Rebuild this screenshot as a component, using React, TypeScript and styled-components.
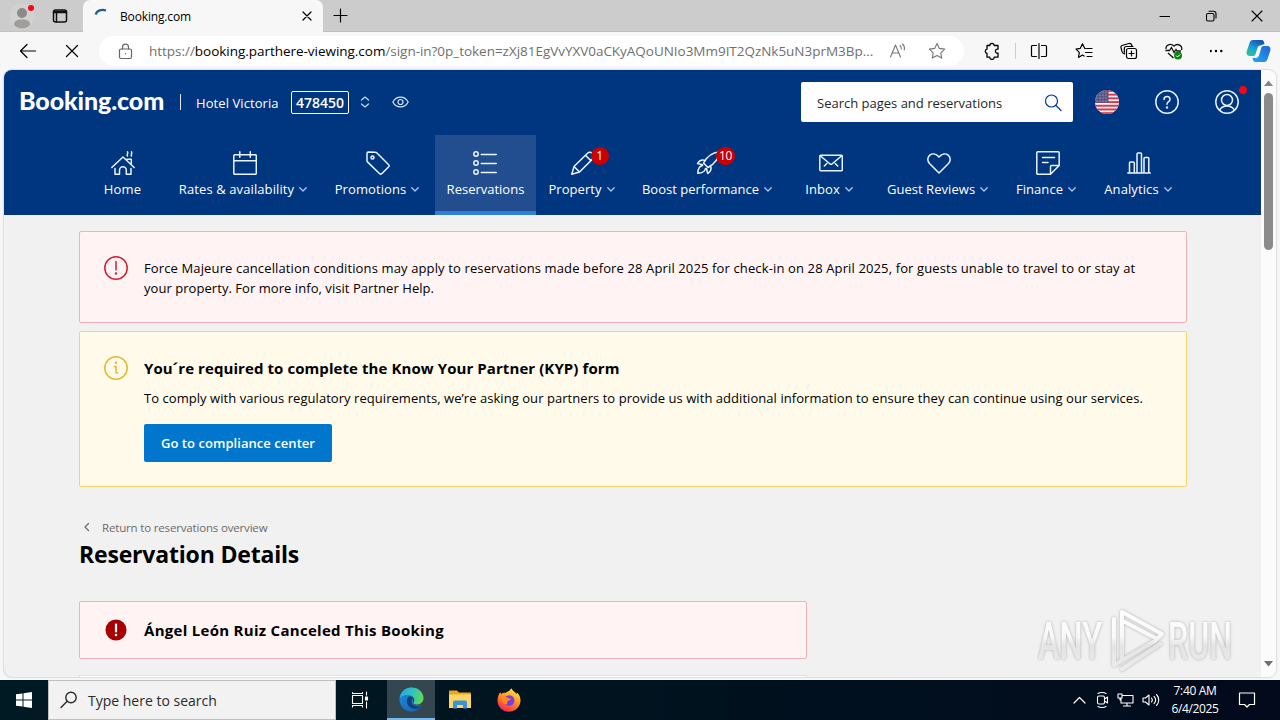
import React from 'react';
import styled, { createGlobalStyle } from 'styled-components';

const GlobalStyle = createGlobalStyle`
  * {
    box-sizing: border-box;
  }

  body {
    margin: 0;
    overflow: hidden;
    font-family: 'Open Sans', 'Noto Sans', sans-serif;
    color: #000;
  }

  svg {
    display: block;
    flex: none;
  }
`;

const Screen = styled.div`
  width: 1280px;
  height: 720px;
  display: flex;
  flex-direction: column;
  background: #f7f7f7;
  overflow: hidden;
`;

const Text = styled.span<{ $size?: number; $spacing?: number; $weight?: number; $color?: string }>`
  font-size: ${({ $size }) => $size ?? 13}px;
  letter-spacing: ${({ $spacing }) => $spacing ?? 0}px;
  font-weight: ${({ $weight }) => $weight ?? 400};
  color: ${({ $color }) => $color ?? 'inherit'};
  white-space: nowrap;
`;

/* ---------- browser chrome ---------- */

const TitleBar = styled.div`
  height: 32px;
  flex: none;
  display: flex;
  background: #ccc;
`;

const ProfileArea = styled.div`
  width: 83px;
  display: flex;
  align-items: center;
  gap: 16px;
  padding-left: 10px;
  border-bottom: 1px solid #c2c2c2;
`;

const Tab = styled.div`
  width: 240px;
  display: flex;
  align-items: center;
  padding: 0 9px 0 11px;
  background: #f7f7f7;
  border-radius: 7px 7px 0 0;
`;

const TabTitle = styled(Text)`
  flex: 1;
  margin-left: 10px;
`;

const TabStrip = styled.div`
  flex: 1;
  display: flex;
  align-items: center;
  padding-left: 10px;
  border-bottom: 1px solid #bdbdbd;
`;

const WindowButtons = styled.div`
  margin-left: auto;
  margin-right: 17px;
  display: flex;
  gap: 34px;
`;

const Toolbar = styled.div`
  height: 38px;
  flex: none;
  display: flex;
  align-items: center;
  padding-left: 19px;
`;

const StopButton = styled.div`
  margin: 0 20px 0 28px;
`;

const AddressBar = styled.div`
  width: 865px;
  height: 30px;
  flex: none;
  padding: 0 0 0 18px;
  display: flex;
  align-items: center;
  background: #fff;
  border-radius: 15px;
`;

const Url = styled(Text)`
  width: 740px;
  margin-left: 15px;

  b {
    font-weight: 400;
    color: #000;
  }
`;

const AddressIcons = styled.div`
  display: flex;
  gap: 21px;
`;

const ToolbarActions = styled.div`
  flex: 1;
  display: flex;
  align-items: center;
  justify-content: space-between;
  padding: 0 9px 0 19px;
`;

const ActionGroup = styled.div`
  display: flex;
  align-items: center;
  gap: 27px;
`;

const Separator = styled.div`
  width: 1px;
  height: 16px;
  margin: 0 -13px;
  background: #ccc;
`;

/* ---------- page ---------- */

const Viewport = styled.div`
  width: 1272px;
  height: 607px;
  margin: 0 4px;
  flex: none;
  display: flex;
  background: #f1f1f1;
  border-radius: 8px;
  overflow: hidden;
  box-shadow: 0 0 2px rgba(0, 0, 0, 0.35);
`;

const Page = styled.div`
  width: 1257px;
  height: 607px;
  overflow: hidden;
`;

const Scrollbar = styled.div`
  width: 15px;
  display: flex;
  flex-direction: column;
  align-items: center;
  background: #fbfbfb;
  padding: 10px 0 10px;
`;

const Thumb = styled.div`
  width: 9px;
  height: 157px;
  margin: 7px 0 auto;
  border-radius: 5px;
  background: #8b8b8b;
`;

const Header = styled.header`
  height: 145px;
  background: #003580;
  color: #fff;
`;

const TopRow = styled.div`
  height: 64px;
  margin-bottom: 1px;
  display: flex;
  align-items: center;
  padding: 0 22px 0 15px;
`;

const Logo = styled.div`
  width: 161px;
  font-family: Lato, 'Open Sans', sans-serif;
  font-size: 25px;
  line-height: 28px;
  font-weight: 900;
  letter-spacing: -0.1px;
  margin-top: -5px;
`;

const Divider = styled.div`
  width: 1px;
  height: 16px;
  background: #e3ebf5;
  margin-right: 15px;
`;

const PropertyName = styled(Text)`
  width: 83px;
  padding-top: 1px;
`;

const PropertyId = styled.div`
  width: 58px;
  height: 23px;
  margin: 1px 11px 0 12px;
  display: flex;
  align-items: center;
  justify-content: center;
  border: 1px solid #fff;
  border-radius: 2px;
`;

const Watching = styled.div`
  margin-left: 22px;
`;

const Search = styled.div`
  width: 272px;
  height: 40px;
  margin-left: auto;
  padding: 1px 11px 0 16px;
  display: flex;
  align-items: center;
  justify-content: space-between;
  background: #fff;
  color: #262626;
  border-radius: 2px;
`;

const HeaderIcons = styled.div`
  width: 144px;
  margin-left: 22px;
  display: flex;
  justify-content: space-between;
`;

const WithDot = styled.div`
  position: relative;
`;

const Dot = styled.i<{ $x: number; $y: number; $size: number }>`
  position: absolute;
  left: ${({ $x }) => $x}px;
  top: ${({ $y }) => $y}px;
  width: ${({ $size }) => $size}px;
  height: ${({ $size }) => $size}px;
  border-radius: 50%;
  background: #f00a14;
`;

const Nav = styled.nav`
  height: 80px;
  padding-left: 76px;
  display: flex;
`;

const NavItem = styled.div<{ $width: number; $active?: boolean }>`
  width: ${({ $width }) => $width}px;
  height: 80px;
  padding-top: 16px;
  display: flex;
  flex-direction: column;
  align-items: center;
  background: ${({ $active }) => ($active ? '#224e90' : 'transparent')};
  border-bottom: ${({ $active }) => ($active ? '4px solid #2f80d8' : '0')};
`;

const NavIcon = styled.div<{ $shift: number }>`
  position: relative;
  height: 25px;
  margin-left: ${({ $shift }) => $shift}px;
`;

const NavLabel = styled.div`
  height: 26px;
  display: flex;
  align-items: center;
  gap: 5px;
`;

const Badge = styled.span`
  position: absolute;
  left: 20px;
  top: -4px;
  min-width: 18px;
  height: 18px;
  padding: 0 3px;
  border-radius: 9px;
  background: #c00;
  font-size: 12px;
  letter-spacing: -0.3px;
  line-height: 18px;
  text-align: center;
`;

const Content = styled.main`
  padding: 16px 74px 0 75px;
`;

const Alert = styled.section<{ $tone: 'red' | 'yellow'; $height: number; $width?: number }>`
  width: ${({ $width }) => $width ?? 1108}px;
  height: ${({ $height }) => $height}px;
  margin-bottom: 8px;
  padding: 0 24px;
  display: flex;
  gap: 16px;
  border: 1px solid ${({ $tone }) => ($tone === 'red' ? '#f5afb9' : '#f5d568')};
  border-radius: 2px;
  background: ${({ $tone }) => ($tone === 'red' ? '#fff3f3' : '#fffaea')};
`;

const AlertIcon = styled.div<{ $top: number }>`
  padding-top: ${({ $top }) => $top}px;
`;

const AlertBody = styled.div<{ $top: number }>`
  padding-top: ${({ $top }) => $top}px;
  display: flex;
  flex-direction: column;
  align-items: flex-start;
  line-height: 20px;
`;

const ComplianceButton = styled.button`
  width: 188px;
  height: 38px;
  margin-top: 16px;
  padding: 0;
  border: 0;
  border-radius: 2px;
  background: #0077cc;
  color: #fff;
  font-family: inherit;
`;

const AlertTitle = styled(Text)`
  margin-bottom: 10px;
`;

const BackLink = styled.div`
  height: 20px;
  margin-top: 30px;
  padding-left: 4px;
  display: flex;
  align-items: center;
  gap: 12px;
  color: #6b6b6b;
`;

const Heading = styled.h1`
  height: 34px;
  margin: 0 0 30px;
  font-size: 23px;
  line-height: 34px;
  font-weight: 700;
  letter-spacing: -0.18px;
`;

const NextCard = styled.div`
  width: 728px;
  height: 20px;
  margin-top: 16px;
  border: 1px solid #e2e2e2;
  background: #fff;
`;

/* ---------- taskbar ---------- */

const Taskbar = styled.div`
  height: 40px;
  margin-top: 3px;
  flex: none;
  display: flex;
  align-items: center;
  background: linear-gradient(90deg, #001a24 0%, #00131f 50%, #020a1c 100%);
  color: #fff;
`;

const TaskCell = styled.div<{ $width: number; $active?: boolean }>`
  width: ${({ $width }) => $width}px;
  height: 40px;
  display: flex;
  align-items: center;
  justify-content: center;
  background: ${({ $active }) => ($active ? '#34474f' : 'transparent')};
  border-bottom: ${({ $active }) => ($active ? '2px solid #76b9ed' : '0')};
`;

const TaskView = styled.div`
  width: 51px;
  padding-left: 15px;
`;

const TaskSearch = styled.div`
  width: 288px;
  height: 40px;
  padding-left: 11px;
  display: flex;
  align-items: center;
  gap: 10px;
  background: #f2f2f2;
  border: 1px solid #bfbfbf;
  color: #2b2b2b;
`;

const Tray = styled.div`
  margin-left: auto;
  margin-right: 16px;
  display: flex;
  align-items: center;
`;

const TrayIcons = styled.div`
  display: flex;
  align-items: center;
  gap: 8px;
`;

const Clock = styled.div`
  width: 70px;
  display: flex;
  flex-direction: column;
  align-items: center;
  line-height: 18px;
`;

const Watermark = styled.svg`
  position: absolute;
  left: 1030px;
  top: 600px;
  filter: drop-shadow(0 0 1.5px rgba(0, 0, 0, 0.28));
`;

/* ---------- icons ---------- */

type IconProps = {
  w?: number;
  h?: number;
  color?: string;
  stroke?: number;
  children: React.ReactNode;
};

const Icon = ({ w = 24, h = w, color = 'currentColor', stroke = 1.5, children }: IconProps) => (
  <svg
    width={w}
    height={h}
    viewBox={`0 0 ${w} ${h}`}
    fill="none"
    stroke={color}
    strokeWidth={stroke}
    strokeLinecap="round"
    strokeLinejoin="round"
  >
    {children}
  </svg>
);

const Chevron = () => (
  <Icon w={8} h={5} stroke={1.3} color="#a9c8f5">
    <path d="M.8.8 4 4 7.2.8" />
  </Icon>
);

const navIcons: Record<string, React.ReactNode> = {
  home: (
    <>
      <path d="M.8 16.500 12 6 23.200 16.500M4 17.500v5.700h4.500v-4a3.300 3.300 0 0 1 6.800 0v4H20v-5.700M16 8.200h4.300v5.200" />
      <path d="M16.500 5c-1-1.500 1-2.300 0-4.200M20.500 5c-1-1.500 1-2.300 0-4.200" />
    </>
  ),
  calendar: (
    <>
      <rect x=".8" y="3.8" width="22.500" height="19.500" rx="1" />
      <path d="M.8 9.800h22.500M6.800.8v5.500M17.300.8v5.500" />
    </>
  ),
  tag: (
    <>
      <path d="M1 2.500v7.200c0 .6.3 1 .7 1.400l12 11.600c.6.5 1.400.5 2 0l7-7c.6-.6.6-1.400 0-2L11 2c-.4-.5-.9-.7-1.500-.7L2.200 1C1.500 1 1 1.700 1 2.500z" />
      <circle cx="6.500" cy="6.500" r="1.500" />
    </>
  ),
  list: (
    <>
      <circle cx="3" cy="3" r="2.200" />
      <circle cx="3" cy="12" r="2.200" />
      <circle cx="3" cy="21" r="2.200" />
      <path d="M8.300 3.500h15M8.300 12.500h15M8.300 21.500h15" />
    </>
  ),
  pencil: (
    <path d="M.8 23.200 3 15.500 16.500 2.200a3 3 0 0 1 4.500 0l.9.900a3 3 0 0 1 0 4.500L8.500 21zM3 15.500 8.500 21M14.500 4.300l5.300 5.300" />
  ),
  rocket: (
    <path d="M7.500 12C11 5.500 15.500 1.500 23 1c-.4 7.500-4.500 12-11 15.500zM9.500 9.500C6 8.200 3.200 9.500 1.500 12.500l5 1.200M14.500 14.500c1.300 3.500.2 6.300-2.800 8l-1.200-5M6.500 14.500c-3 .5-4.500 3.500-4.800 7.800 4.300-.3 7.300-1.800 7.800-4.800" />
  ),
  mail: (
    <>
      <rect x=".8" y="4.300" width="22.500" height="15.500" rx="1" />
      <path d="m1.500 5 9.300 7.800c.8.600 1.600.6 2.400 0L22.500 5M5.300 15l2.500-2.500M18.700 15l-2.500-2.500" />
    </>
  ),
  heart: <path d="M12 22 2.500 12.500c-5.300-6 3-14 9.500-6.500 6.500-7.500 14.800.5 9.500 6.500z" />,
  note: (
    <path d="M14.500 23.300H1.800a1 1 0 0 1-1-1V1.800a1 1 0 0 1 1-1h20.400a1 1 0 0 1 1 1v12.700zM14.500 23.300v-7.800a1 1 0 0 1 1-1h7.700M6.500 6.500h12M6.500 11.500h5.500" />
  ),
  chart: (
    <path d="M.8 22h22.500M2.500 22V12a1 1 0 0 1 1-1h2.800a1 1 0 0 1 1 1v10M10 22V3a1 1 0 0 1 1-1h2.500a1 1 0 0 1 1 1v19M17 22V7.500a1 1 0 0 1 1-1h2.800a1 1 0 0 1 1 1V22" />
  ),
};

const navItems = [
  { label: 'Home', icon: 'home', width: 85, spacing: 0.25, shift: 1 },
  { label: 'Rates & availability', icon: 'calendar', width: 156, spacing: 0.1, shift: 3, menu: true },
  { label: 'Promotions', icon: 'tag', width: 112, spacing: 0.1, shift: 2, menu: true },
  { label: 'Reservations', icon: 'list', width: 101, spacing: 0, shift: -1, active: true },
  { label: 'Property', icon: 'pencil', width: 91, spacing: 0.05, shift: 2, menu: true, badge: 1 },
  { label: 'Boost performance', icon: 'rocket', width: 160, spacing: 0, shift: 2, menu: true, badge: 10 },
  { label: 'Inbox', icon: 'mail', width: 84, spacing: 0.1, shift: 4, menu: true },
  { label: 'Guest Reviews', icon: 'heart', width: 133, spacing: 0.05, shift: 2, menu: true },
  { label: 'Finance', icon: 'note', width: 84, spacing: 0.05, shift: 4, menu: true },
  { label: 'Analytics', icon: 'chart', width: 100, spacing: 0.1, shift: 2, menu: true },
];

const NavSpacer = styled.div`
  width: 2px;
`;

const FlagUS = () => (
  <svg width="24" height="24" viewBox="0 0 24 24">
    <clipPath id="flag">
      <circle cx="12" cy="12" r="12" />
    </clipPath>
    <g clipPath="url(#flag)">
      <rect width="24" height="24" fill="#f3eef2" />
      {[0, 3.7, 7.4, 11.1, 14.8, 18.5, 22.2].map((y) => (
        <rect key={y} y={y} width="24" height="1.900" fill="#d8384a" />
      ))}
      <rect width="13.500" height="12.900" fill="#5a5582" />
      {[2, 5, 8, 11].map((y) =>
        [2, 5, 8, 11].map((x) => <circle key={`${x}-${y}`} cx={x} cy={y} r=".6" fill="#c9cbe0" />),
      )}
    </g>
  </svg>
);

const Copilot = () => (
  <svg width="25" height="24" viewBox="0 0 25 24">
    <defs>
      <linearGradient id="cpA" x1="0" y1="1" x2=".6" y2="0">
        <stop offset="0" stopColor="#36c98a" />
        <stop offset=".5" stopColor="#1ba4d5" />
        <stop offset="1" stopColor="#1456b8" />
      </linearGradient>
      <linearGradient id="cpB" x1="0" y1="1" x2="1" y2="0">
        <stop offset="0" stopColor="#1fa8ee" />
        <stop offset="1" stopColor="#2165d9" />
      </linearGradient>
    </defs>
    <path d="M7 1h8.500c2 0 2.500 1.500 3 4l-4 1.500c-2 0-2.700 1.200-3.200 3L9.500 15c-.5 1.500-1.300 2-3 2H4c-3 0-4-2.300-3.200-5L3.500 4C4.200 2 5 1 7 1z" fill="url(#cpA)" />
    <path d="M18 23H9.500c-2 0-2.500-1.500-3-4 0 0 3.800.3 5-.5 1.300-.8 1.500-2 2-3.500L15.200 9c.5-1.500 1.300-2 3-2H21c3 0 4 2.300 3.200 5l-2.700 8c-.7 2-1.500 3-3.500 3z" fill="url(#cpB)" />
  </svg>
);

const Edge = () => (
  <svg width="25" height="25" viewBox="0 0 25 25">
    <defs>
      <linearGradient id="edgeTop" x1="0" y1=".3" x2="1" y2=".5">
        <stop offset="0" stopColor="#2aa8e0" />
        <stop offset=".5" stopColor="#2cc3c0" />
        <stop offset="1" stopColor="#63d957" />
      </linearGradient>
      <linearGradient id="edgeLow" x1="0" y1="0" x2="1" y2="1">
        <stop offset="0" stopColor="#1b8edb" />
        <stop offset="1" stopColor="#1a5fb0" />
      </linearGradient>
    </defs>
    <path d="M.5 12.500C.5 5.500 6 .5 12.500.5L14 16c1.500 2.500 5.500 3 9 1.500-2 4.500-6 7-10.500 7-6.500 0-12-5.500-12-12z" fill="url(#edgeLow)" />
    <path d="M10 9.500c-3 2-3 8 1.500 11 3.500 2.300 8 1.500 11-1.500-4 1.500-9 0-10-3.500-.5-2 .5-3 1-4.500-.5-1-2-2-3.500-1.500z" fill="#103f7c" />
    <path d="M.6 11.500C1.500 5 6.500.5 12.500.5c7 0 12 5 12 10.500 0 4-3 6.500-6.500 6.500-2.500 0-4-1-3.500-2 2.500-3-.5-7.500-5.500-7.500-4 0-7 1.500-8.400 3.500z" fill="url(#edgeTop)" />
  </svg>
);

const Folder = () => (
  <svg width="22" height="20" viewBox="0 0 22 20">
    <path d="M0 1.500C0 .7.500.5 1 .5h7l2 2h11c.6 0 1 .4 1 1V18H0z" fill="#e9a823" />
    <path d="M0 4.500h22V18H0z" fill="#fcd562" />
    <path d="M4 18.500v-6a2 2 0 0 1 2-2h10a2 2 0 0 1 2 2v6h-4v-3.500H8v3.500z" fill="#3b93d6" />
  </svg>
);

const Firefox = () => (
  <svg width="24" height="24" viewBox="0 0 24 24">
    <defs>
      <linearGradient id="fox" x1=".8" y1="0" x2=".3" y2="1">
        <stop offset="0" stopColor="#fff14a" />
        <stop offset=".45" stopColor="#ff9a1f" />
        <stop offset="1" stopColor="#f5224f" />
      </linearGradient>
    </defs>
    <path d="M3.500 4c0 1 .3 1.500.8 2C5.500 5 7 4.500 8.500 5c.7-.8 1.500-1.300 2.500-1.500C12.500 3 13 1.500 14.500.2c.3 2.300 3.500 3 5 6 .3-.5.3-1.200.2-2C23 7 24 11 23.300 14.500 22.200 20 17.500 23.800 12 23.800 5.500 23.800.5 18.700.5 12.500c0-3 1-6.500 3-8.500z" fill="url(#fox)" />
    <circle cx="12.300" cy="12.500" r="5.200" fill="#7a3ee0" />
    <path d="M4.500 8.500c3 0 4.500.5 6.500 1.500 1.500.8 2.300.5 3 .5-.5 1.500-2 1.500-3 2.500-1 .8-1.500 2-.5 3-3.500 1-6.500-3-6-7.500z" fill="#ff8a1c" />
  </svg>
);

function App() {
  return (
    <>
      <GlobalStyle />
      <Screen>
        <TitleBar>
          <ProfileArea>
            <WithDot>
              <svg width="26" height="26" viewBox="0 0 26 26">
                <circle cx="12" cy="13" r="12.500" fill="#d3d1d0" />
                <circle cx="12" cy="10" r="5" fill="#8d8b8a" />
                <path d="M4 22c0-4 2.500-5.500 8-5.500s8 1.500 8 5.500c-2 2.500-5 3.300-8 3.300S6 24.500 4 22z" fill="#a09d9b" />
              </svg>
              <Dot $x={18} $y={2} $size={6} />
            </WithDot>
            <Icon w={16} color="#111">
              <rect x="1.500" y="2" width="13" height="12" rx="2" />
              <path d="M1.500 4.500h13M4.500 4.500V14M2 3.500h12" />
            </Icon>
          </ProfileArea>
          <Tab>
            <Icon w={16} stroke={2.2} color="#1c5f96">
              <path d="M1.500 6.500C3 2.500 7.500.8 12 2.500" strokeLinecap="butt" />
            </Icon>
            <TabTitle $size={12} $spacing={-0.15}>Booking.com</TabTitle>
            <Icon w={14} stroke={1.2}>
              <path d="m3 3 8 8M11 3l-8 8" />
            </Icon>
          </Tab>
          <TabStrip>
            <Icon w={15} stroke={1.2}>
              <path d="M7.500 1v13M1 7.500h13" />
            </Icon>
            <WindowButtons>
              <Icon w={12} stroke={1.1}>
                <path d="M1 6.500h9.500" />
              </Icon>
              <Icon w={12} stroke={1.1}>
                <rect x="1.500" y="3.500" width="7.500" height="7.500" rx="1.500" />
                <path d="M4 1.300h4.500a2.500 2.500 0 0 1 2.500 2.500V8" />
              </Icon>
              <Icon w={12} stroke={1.1}>
                <path d="m1 1 10 10M11 1 1 11" />
              </Icon>
            </WindowButtons>
          </TabStrip>
        </TitleBar>

        <Toolbar>
          <Icon w={18} stroke={1.2}>
            <path d="M16.500 9H1.500M8 2.500 1.500 9 8 15.500" />
          </Icon>
          <StopButton>
            <Icon w={14} stroke={1.2}>
              <path d="m1.500 1.500 11 11M12.500 1.500l-11 11" />
            </Icon>
          </StopButton>
          <AddressBar>
            <Icon w={17} color="#666" stroke={1.2}>
              <rect x="2.500" y="6" width="12" height="9.500" rx="1.500" />
              <path d="M5.500 6V4.200a3 3 0 0 1 6 0V6" />
              <circle cx="8.500" cy="10.700" r=".7" fill="#666" stroke="none" />
            </Icon>
            <Url $size={13.5} $spacing={-0.03} $color="#707070">
              https://<b>booking.parthere-viewing.com</b>/sign-in?0p_token=zXj81EgVvYXV0aCKyAQoUNIo3Mm9IT2QzNk5uN3prM3Bp...
            </Url>
            <AddressIcons>
              <Icon w={18} color="#777" stroke={1.1}>
                <path d="M1.500 15 6.500 3l5 12M3.200 11h6.600M11 3.500c1 .8 1.500 2 1.300 3.500M13.500 2c1.700 1.500 2.300 3.500 1.800 6" />
              </Icon>
              <Icon w={18} color="#777" stroke={1.1}>
                <path d="m9 1.500 2.300 4.900 5.400.7-3.900 3.700.9 5.300L9 13.500l-4.700 2.600.9-5.300L1.300 7.100l5.400-.7z" />
              </Icon>
            </AddressIcons>
          </AddressBar>
          <ToolbarActions>
            <ActionGroup>
              <Icon w={18} stroke={1.3}>
                <path d="M4 3.500h2.800a2.200 2.200 0 0 1 4.400 0H15v3.700a2 2 0 1 0 0 3.800v4.200h-3.800a2.200 2.200 0 0 1-4.400 0H4V11.500a2.200 2.200 0 0 1 0-4.300z" />
              </Icon>
              <Separator />
              <Icon w={18} stroke={1.2}>
                <path d="M6.500 3.500h-4a1 1 0 0 0-1 1v9a1 1 0 0 0 1 1h4M11.500 3.500h4a1 1 0 0 1 1 1v9a1 1 0 0 1-1 1h-4M9 1.500v15" />
              </Icon>
              <Icon w={18} stroke={1.2}>
                <path d="M11 6.500H9.800L7.500 1.800 5.200 6.400l-4.200.7 3.300 3.300-.8 5 4-2.300 1.500 1M12 6.500h5M10.500 10.500H17M12 14.500h5" />
              </Icon>
              <Icon w={18} stroke={1.2}>
                <path d="M4.300 12C2.500 11.500 2 10.500 1.800 9L1 5.500c-.3-1 .2-1.800 1-2L9 1.500c1.500-.3 2.500.5 3 2.500" />
                <rect x="6.500" y="6.500" width="10" height="10" rx="2" />
                <path d="M4.300 11.500V6.500a2 2 0 0 1 2-2H13M11.500 9v5M9 11.500h5" />
              </Icon>
              <svg width="18" height="18" viewBox="0 0 18 18" fill="none" stroke="#111" strokeWidth="1.300">
                <path d="M1.200 7C0 3 5.500.8 9 4c3.500-3.200 9-.5 7.500 4M.5 8.500h4l2-3 2.500 5 2-3 1 1.500h4M3 11l5.500 5" />
                <circle cx="13" cy="13.500" r="4" fill="#128012" stroke="none" />
                <path d="m11 13.500 1.500 1.500 2.700-2.700" stroke="#fff" strokeWidth="1" />
              </svg>
              <svg width="14" height="4" viewBox="2 0 14 4">
                <circle cx="2.700" cy="2" r="1.200" />
                <circle cx="8" cy="2" r="1.200" />
                <circle cx="13.300" cy="2" r="1.200" />
              </svg>
            </ActionGroup>
            <Copilot />
          </ToolbarActions>
        </Toolbar>

        <Viewport>
          <Page>
            <Header>
              <TopRow>
                <Logo>Booking.com</Logo>
                <Divider />
                <PropertyName $spacing={0.08}>Hotel Victoria</PropertyName>
                <PropertyId>
                  <Text $size={14} $weight={600}>478450</Text>
                </PropertyId>
                <Icon w={10} h={12} stroke={1.2} color="#c5dcfa">
                  <path d="m1.500 4 3.500-3 3.500 3M1.500 8l3.500 3 3.500-3" />
                </Icon>
                <Watching>
                  <Icon w={17} h={12} stroke={1.2} color="#d5e6fb">
                    <path d="M.8 6C4.500-.6 12.500-.6 16.200 6 12.500 12.600 4.500 12.600.8 6z" />
                    <circle cx="8.500" cy="6" r="2.500" />
                  </Icon>
                </Watching>
                <Search>
                  <Text>Search pages and reservations</Text>
                  <Icon w={18} stroke={1.2} color="#003f94">
                    <circle cx="7.500" cy="7" r="6" />
                    <path d="m12 11.500 5 5" />
                  </Icon>
                </Search>
                <HeaderIcons>
                  <FlagUS />
                  <Icon w={24} color="#e6f1ff">
                    <circle cx="12" cy="12" r="11.200" />
                    <path d="M9 9.500c0-4 6-4 6 0 0 2.200-3 2.200-3 4.800" />
                    <circle cx="12" cy="17.500" r=".5" />
                  </Icon>
                  <WithDot>
                    <Icon w={24} color="#e6f1ff">
                      <circle cx="12" cy="12" r="11.200" />
                      <circle cx="12" cy="10" r="5.500" />
                      <path d="M4.500 20c3.500-5.500 11.500-5.500 15 0" />
                    </Icon>
                    <Dot $x={24} $y={-4} $size={8} />
                  </WithDot>
                </HeaderIcons>
              </TopRow>
              <Nav>
                {navItems.map((item) => (
                  <React.Fragment key={item.label}>
                    {item.active && <NavSpacer />}
                    <NavItem $width={item.width} $active={item.active}>
                      <NavIcon $shift={item.shift}>
                        <Icon w={24} color="#eaf4ff">
                          {navIcons[item.icon]}
                        </Icon>
                        {item.badge && <Badge>{item.badge}</Badge>}
                      </NavIcon>
                      <NavLabel>
                        <Text $spacing={item.spacing}>{item.label}</Text>
                        {item.menu && <Chevron />}
                      </NavLabel>
                    </NavItem>
                  </React.Fragment>
                ))}
              </Nav>
            </Header>

            <Content>
              <Alert $tone="red" $height={92}>
                <AlertIcon $top={24}>
                  <Icon w={24} color="#d4202f">
                    <circle cx="12" cy="12" r="11.200" />
                    <path d="M12 5.500v8.500" />
                    <circle cx="12" cy="17.500" r=".5" />
                  </Icon>
                </AlertIcon>
                <AlertBody $top={26}>
                  <Text $spacing={0.13}>
                    Force Majeure cancellation conditions may apply to reservations made before 28 April 2025 for check-in on 28 April 2025, for guests unable to travel to or stay at
                  </Text>
                  <Text $spacing={0.05}>your property. For more info, visit Partner Help.</Text>
                </AlertBody>
              </Alert>

              <Alert $tone="yellow" $height={156}>
                <AlertIcon $top={24}>
                  <Icon w={24} color="#e5b92b">
                    <circle cx="12" cy="12" r="11.200" />
                    <path d="M10.500 10.500H12v5.500c0 1 .5 1.300 1.700 1" />
                    <circle cx="12" cy="6.800" r=".5" />
                  </Icon>
                </AlertIcon>
                <AlertBody $top={26}>
                  <AlertTitle $size={15} $weight={700} $spacing={0.08}>You´re required to complete the Know Your Partner (KYP) form</AlertTitle>
                  <Text $spacing={0.05}>
                    To comply with various regulatory requirements, we’re asking our partners to provide us with additional information to ensure they can continue using our services.
                  </Text>
                  <ComplianceButton>
                    <Text $weight={600} $spacing={0.05}>Go to compliance center</Text>
                  </ComplianceButton>
                </AlertBody>
              </Alert>

              <BackLink>
                <Icon w={7} h={10} stroke={1.2}>
                  <path d="M5.500 1.500 2 5l3.500 3.500" />
                </Icon>
                <Text $size={11.5} $spacing={-0.17}>Return to reservations overview</Text>
              </BackLink>
              <Heading>Reservation Details</Heading>

              <Alert $tone="red" $height={58} $width={728}>
                <AlertIcon $top={16}>
                  <svg width="24" height="24" viewBox="0 0 24 24">
                    <circle cx="12" cy="12" r="10.500" fill="#a80000" />
                    <path d="M12 6.500v7" stroke="#fff" strokeWidth="2.200" strokeLinecap="round" />
                    <circle cx="12" cy="17" r="1.300" fill="#fff" />
                  </svg>
                </AlertIcon>
                <AlertBody $top={18}>
                  <Text $size={15} $weight={700} $spacing={0.29}>Ángel León Ruiz Canceled This Booking</Text>
                </AlertBody>
              </Alert>
              <NextCard />
            </Content>
          </Page>
          <Scrollbar>
            <svg width="9" height="6" viewBox="0 0 9 6">
              <path d="M0 6 4.500.5 9 6z" fill="#858585" />
            </svg>
            <Thumb />
            <svg width="9" height="6" viewBox="0 0 9 6">
              <path d="M0 0 4.500 5.500 9 0z" fill="#707070" />
            </svg>
          </Scrollbar>
        </Viewport>

        <Taskbar>
          <TaskCell $width={48}>
            <svg width="16" height="16" viewBox="0 0 16 16" fill="#fff">
              <path d="M0 2.300 6.500 1.400v6.100H0zM7.500 1.200 16 0v7.500H7.500zM0 8.500h6.500v6.100L0 13.700zM7.500 8.500H16V16l-8.500-1.200z" />
            </svg>
          </TaskCell>
          <TaskSearch>
            <Icon w={18} stroke={1.4}>
              <circle cx="11" cy="6.500" r="5.200" />
              <path d="M7.200 10.300 1 16.500" />
            </Icon>
            <Text $size={14}>Type here to search</Text>
          </TaskSearch>
          <TaskView>
            <Icon w={18} h={18} stroke={1.1}>
              <path d="M1.500 4.500h10v8h-10zM1.500 1.500v1h10v-1M1.500 16v-1.500h10V16M15.500 1v3M15.500 11v6" />
              <rect x="14.500" y="6" width="2" height="3" fill="#fff" />
            </Icon>
          </TaskView>
          <TaskCell $width={48} $active>
            <Edge />
          </TaskCell>
          <TaskCell $width={49}>
            <Folder />
          </TaskCell>
          <TaskCell $width={49}>
            <Firefox />
          </TaskCell>
          <Tray>
            <TrayIcons>
              <Icon w={13} h={8} stroke={1.2}>
                <path d="M1 7 6.500 1.500 12 7" />
              </Icon>
              <Icon w={15} h={18} stroke={1.1}>
                <rect x="3.500" y="5" width="7" height="8" rx="1.500" />
                <path d="m10.500 8 3-2v6l-3-2M4 2.500c2-1.300 6-1.300 8 0M4 15.500c2 1.300 6 1.300 8 0" />
              </Icon>
              <Icon w={17} h={16} stroke={1.1}>
                <path d="M6 3.500h10v7.500H4V7M10 11v3M6.500 14h7M1 2h4v4H1zM3 6v2" />
              </Icon>
              <Icon w={18} h={16} stroke={1.1}>
                <path d="M1 6v4h2.500L7 13V3L3.500 6zM9.500 6c1 1.200 1 2.800 0 4M12 4.300c2 2.200 2 5.200 0 7.400M14.500 2.500c3 3.200 3 7.800 0 11" />
              </Icon>
            </TrayIcons>
            <Clock>
              <Text $size={12} $spacing={-0.35}>7:40 AM</Text>
              <Text $size={12} $spacing={-0.35}>6/4/2025</Text>
            </Clock>
            <TaskCell $width={34}>
              <Icon w={18} h={18} stroke={1.2}>
                <path d="M1.500 2h15v11.500h-5L9 16l-2.500-2.500h-5z" />
              </Icon>
            </TaskCell>
          </Tray>
        </Taskbar>
      </Screen>

      <Watermark width="244" height="80" viewBox="0 0 244 80">
        <defs>
          <linearGradient id="mark" gradientUnits="userSpaceOnUse" x1="0" y1="10" x2="0" y2="70">
            <stop offset="0" stopColor="#fff" />
            <stop offset=".45" stopColor="#f8f8f8" />
            <stop offset=".6" stopColor="#e4e4e4" />
            <stop offset="1" stopColor="#ececec" />
          </linearGradient>
        </defs>
        <g fill="url(#mark)" fontFamily="Roboto, sans-serif" fontSize="51" fontWeight="500">
          <text x="8" y="59" textLength="64" lengthAdjust="spacingAndGlyphs">ANY</text>
          <text x="138" y="59" textLength="64" lengthAdjust="spacingAndGlyphs">RUN</text>
        </g>
        <g fill="none" stroke="url(#mark)" strokeWidth="4" strokeLinejoin="round" strokeLinecap="round">
          <path d="M92 58V12l40 22-5 5-34-18" />
          <path d="M84 19v46l41-24M92 69l38-25" />
        </g>
      </Watermark>
    </>
  );
}

export default App;
